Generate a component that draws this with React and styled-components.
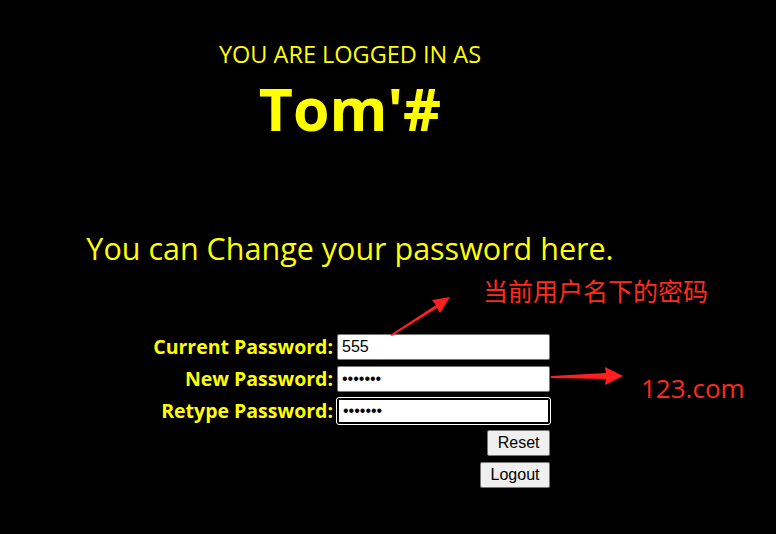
import React from "react";
import styled, { createGlobalStyle } from "styled-components";

const GlobalStyle = createGlobalStyle`
  html, body {
    margin: 0;
    background: #000;
  }
  body {
    font-family: "Open Sans", "Noto Sans", sans-serif;
  }
`;

const Page = styled.div`
  position: relative;
  width: 700px;
  height: 534px;
  padding-top: 38px;
  box-sizing: border-box;
  text-align: center;
  color: #ffff00;
`;

const Caption = styled.div`
  font-size: 23.5px;
  line-height: 32px;
`;

const UserName = styled.h1`
  margin: 2px 0 0;
  font-size: 59px;
  font-weight: 700;
  line-height: 72px;
`;

const Prompt = styled.p`
  margin: 84px 0 0;
  font-size: 30.5px;
  line-height: 40px;
`;

const Form = styled.form`
  display: grid;
  grid-template-columns: 183px 213px;
  column-gap: 4px;
  row-gap: 6px;
  justify-content: center;
  margin-top: 66px;
`;

const Label = styled.label`
  text-align: right;
  font-size: 19.5px;
  font-weight: 700;
  line-height: 26px;
  white-space: nowrap;
`;

const Field = styled.input`
  box-sizing: border-box;
  height: 26px;
  margin: 0;
  padding: 1px 4px;
  border: ${(p) => (p.$focused ? "2px solid #000" : "1px solid #767676")};
  border-radius: 2px;
  outline: ${(p) => (p.$focused ? "1px solid #fff" : "none")};
  background: #fff;
  font-family: "Liberation Sans", Arial, sans-serif;
  font-size: 16px;
  color: #000;
`;

const Button = styled.button`
  grid-column: 2;
  justify-self: end;
  height: 26px;
  padding: 0 9.5px;
  border: 1px solid #767676;
  border-radius: 2px;
  background: #efefef;
  font-family: "Liberation Sans", Arial, sans-serif;
  font-size: 16px;
  color: #000;
`;

const Note = styled.span`
  position: absolute;
  left: ${(p) => p.$x}px;
  top: ${(p) => p.$y}px;
  color: #ff2a1a;
  font-family: "Open Sans", "Noto Sans CJK SC", sans-serif;
  font-size: ${(p) => p.$size}px;
  line-height: 1;
  white-space: nowrap;
`;

const Arrows = styled.svg`
  position: absolute;
  left: 0;
  top: 0;
  pointer-events: none;
`;

export default function App() {
  return (
    <>
      <GlobalStyle />
      <Page>
        <Caption>YOU ARE LOGGED IN AS</Caption>
        <UserName>Tom'#</UserName>
        <Prompt>You can Change your password here.</Prompt>
        <Form onSubmit={(e) => e.preventDefault()}>
          <Label>Current Password:</Label>
          <Field type="text" defaultValue="555" />
          <Label>New Password:</Label>
          <Field type="password" defaultValue="1234567" />
          <Label>Retype Password:</Label>
          <Field type="password" defaultValue="1234567" $focused />
          <Button type="reset">Reset</Button>
          <Button type="button">Logout</Button>
        </Form>

        <Arrows width="776" height="534" viewBox="0 0 776 534">
          <polygon fill="#ff1f1f" points="390,335 436,305 432,300 450,297 440,313 437,308 392,336" />
          <polygon fill="#ff1f1f" points="551,376 606,373 605,367 623,376 605,385 606,379 551,378" />
        </Arrows>
        <Note $x={483} $y={279} $size={25}>当前用户名下的密码</Note>
        <Note $x={641} $y={375} $size={26}>123.com</Note>
      </Page>
    </>
  );
}
